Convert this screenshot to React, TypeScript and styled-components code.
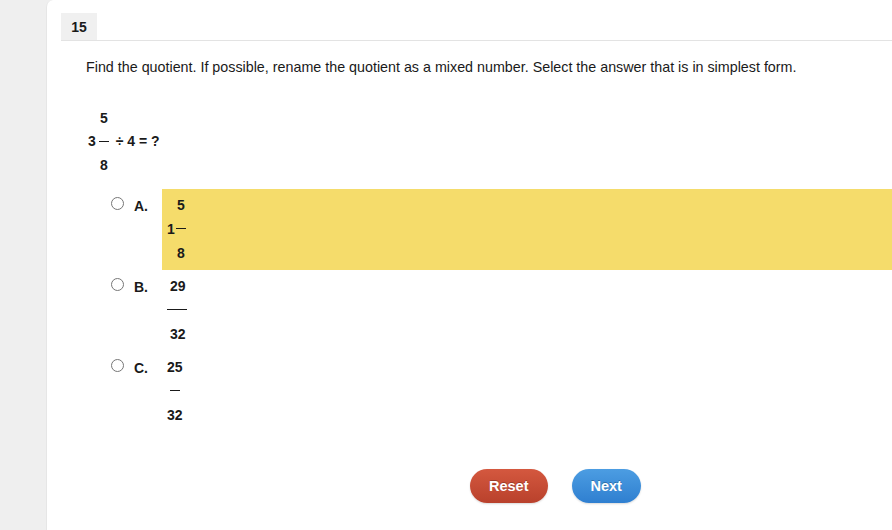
import React from 'react'
import styled, { createGlobalStyle } from 'styled-components'

const GlobalStyle = createGlobalStyle`
  html, body {
    margin: 0;
    padding: 0;
    background: #efefef;
    font-family: "Liberation Sans", Arial, sans-serif;
    color: #1a1a1a;
  }
`

const Page = styled.div`
  padding-left: 46px;
  height: 530px;
  overflow: hidden;
`

const Card = styled.div`
  background: #fff;
  border-top-left-radius: 7px;
  border-left: 1px solid #e6e6e6;
  min-height: 530px;
  padding: 13px 0 0 14px;
  box-sizing: border-box;
`

const Header = styled.div`
  display: flex;
  border-bottom: 1px solid #e3e3e3;
`

const Number = styled.div`
  background: #f0f0f0;
  width: 36px;
  height: 27px;
  display: flex;
  align-items: center;
  justify-content: center;
  font-weight: bold;
  font-size: 14px;
`

const Body = styled.div`
  padding: 12px 0 0 25px;
`

const Prompt = styled.p`
  margin: 0;
  font-size: 14.3px;
  line-height: 28px;
`

const Expression = styled.div`
  margin: 25px 0 0 2px;
  display: grid;
  grid-template-columns: auto auto auto;
  grid-template-rows: repeat(3, 23.5px);
  align-items: center;
  justify-content: start;
  font-weight: bold;
  font-size: 14px;
`

const Cell = styled.span<{ $row: number; $col: number; $center?: boolean }>`
  grid-row: ${(p) => p.$row};
  grid-column: ${(p) => p.$col};
  text-align: ${(p) => (p.$center ? 'center' : 'left')};
  white-space: pre;
`

const Dash = styled.span`
  grid-row: 2;
  grid-column: 2;
  justify-self: center;
  width: 10px;
  height: 1px;
  margin: 0 3px;
  background: #1a1a1a;
`

const Options = styled.div`
  margin-top: 12px;
`

const Option = styled.label`
  display: flex;
  align-items: flex-start;
  height: 81px;
`

const Radio = styled.input`
  margin: 8px 0 0 50px;
  width: 13px;
  height: 13px;
`

const Letter = styled.span`
  width: 28px;
  padding: 9px 0 0 10px;
  font-weight: bold;
  font-size: 14px;
`

const Answer = styled.div<{ $selected?: boolean }>`
  flex: 1;
  align-self: stretch;
  background: ${(p) => (p.$selected ? '#f5dc6b' : 'transparent')};
  padding: 4px 0 0 5px;
  font-weight: bold;
  font-size: 14px;
`

const Line = styled.div<{ $indent?: number }>`
  height: 24px;
  display: flex;
  align-items: center;
  padding-left: ${(p) => p.$indent ?? 0}px;
  white-space: pre;
`

const Bar = styled.span<{ $width: number; $gap?: number }>`
  display: block;
  width: ${(p) => p.$width}px;
  height: 1px;
  margin-left: ${(p) => p.$gap ?? 0}px;
  background: #1a1a1a;
`

const Footer = styled.div`
  display: flex;
  gap: 24px;
  padding: 37px 0 0 409px;
`

const Button = styled.button<{ $tone: 'red' | 'blue' }>`
  height: 34px;
  border-radius: 17px;
  border: none;
  padding: 0 19px;
  font-family: inherit;
  font-weight: bold;
  font-size: 14.5px;
  color: #fff;
  text-shadow: 0 -1px 0 rgba(0, 0, 0, 0.25);
  background: ${(p) =>
    p.$tone === 'red'
      ? 'linear-gradient(#d4583f, #b9412c)'
      : 'linear-gradient(#4c9de2, #2f7fd0)'};
  box-shadow: 0 1px 2px rgba(0, 0, 0, 0.15);
`

export default function App() {
  return (
    <>
      <GlobalStyle />
      <Page>
        <Card>
          <Header>
            <Number>15</Number>
          </Header>
          <Body>
            <Prompt>
              Find the quotient. If possible, rename the quotient as a mixed number. Select the answer that
              is in simplest form.
            </Prompt>
            <Expression>
              <Cell $row={1} $col={2} $center>5</Cell>
              <Cell $row={2} $col={1}>3</Cell>
              <Dash />
              <Cell $row={2} $col={3}> ÷ 4 = ?</Cell>
              <Cell $row={3} $col={2} $center>8</Cell>
            </Expression>
          </Body>
          <Options>
            <Option>
              <Radio type="radio" name="answer" />
              <Letter>A.</Letter>
              <Answer $selected>
                <Line $indent={10}>5</Line>
                <Line>
                  1<Bar $width={10} $gap={1} />
                </Line>
                <Line $indent={10}>8</Line>
              </Answer>
            </Option>
            <Option>
              <Radio type="radio" name="answer" />
              <Letter>B.</Letter>
              <Answer>
                <Line $indent={3}>29</Line>
                <Line>
                  <Bar $width={20} />
                </Line>
                <Line $indent={3}>32</Line>
              </Answer>
            </Option>
            <Option>
              <Radio type="radio" name="answer" />
              <Letter>C.</Letter>
              <Answer>
                <Line>25</Line>
                <Line>
                  <Bar $width={10} $gap={3} />
                </Line>
                <Line>32</Line>
              </Answer>
            </Option>
          </Options>
          <Footer>
            <Button $tone="red">Reset</Button>
            <Button $tone="blue">Next</Button>
          </Footer>
        </Card>
      </Page>
    </>
  )
}
